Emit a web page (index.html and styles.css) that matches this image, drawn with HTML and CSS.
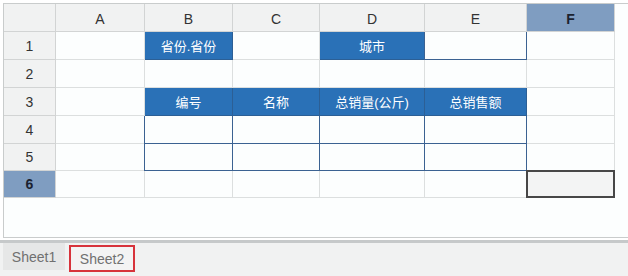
FILE: index.html
```html
<!DOCTYPE html>
<html lang="zh">
<head>
<meta charset="utf-8">
<link rel="stylesheet" href="styles.css">
</head>
<body>
<div class="app">
  <div class="sheet">
    <div class="grid">
      <div class="hd corner"></div>
      <div class="hd">A</div>
      <div class="hd">B</div>
      <div class="hd">C</div>
      <div class="hd">D</div>
      <div class="hd">E</div>
      <div class="hd sel">F</div>

      <div class="rh">1</div>
      <div class="c"></div>
      <div class="c blue">省份.省份</div>
      <div class="c"></div>
      <div class="c blue">城市</div>
      <div class="c boxed"></div>
      <div class="c"></div>

      <div class="rh">2</div>
      <div class="c"></div>
      <div class="c"></div>
      <div class="c"></div>
      <div class="c"></div>
      <div class="c"></div>
      <div class="c"></div>

      <div class="rh">3</div>
      <div class="c"></div>
      <div class="c blue">编号</div>
      <div class="c blue">名称</div>
      <div class="c blue">总销量(公斤)</div>
      <div class="c blue">总销售额</div>
      <div class="c"></div>

      <div class="rh">4</div>
      <div class="c"></div>
      <div class="c boxed"></div>
      <div class="c boxed"></div>
      <div class="c boxed"></div>
      <div class="c boxed"></div>
      <div class="c"></div>

      <div class="rh">5</div>
      <div class="c"></div>
      <div class="c boxed"></div>
      <div class="c boxed"></div>
      <div class="c boxed"></div>
      <div class="c boxed"></div>
      <div class="c"></div>

      <div class="rh sel">6</div>
      <div class="c"></div>
      <div class="c"></div>
      <div class="c"></div>
      <div class="c"></div>
      <div class="c"></div>
      <div class="c active"></div>
    </div>
  </div>
  <div class="tabbar">
    <div class="tab">Sheet1</div>
    <div class="tab current">Sheet2</div>
  </div>
</div>
</body>
</html>
```

FILE: styles.css
```css
* { box-sizing: border-box; }
html, body {
  margin: 0;
  padding: 0;
  background: #ffffff;
  font-family: "Liberation Sans", "Noto Sans CJK SC", Arial, sans-serif;
}
.app {
  width: 628px;
  height: 276px;
  display: flex;
  flex-direction: column;
  padding-top: 3px;
  overflow: hidden;
}
.sheet {
  margin-left: 3px;
  height: 235px;
  border: 1px solid #c9cccc;
  border-right: none;
  background: #fcfefe;
}
.grid {
  display: grid;
  grid-template-columns: 52px 89px 88px 87px 105px 102px 88px;
  grid-template-rows: 28px 28px 28px 28px 28px 27px 27px;
}
.hd, .rh {
  background: #f1f2f2;
  border-right: 1px solid #d2d4d4;
  border-bottom: 1px solid #d2d4d4;
  color: #333;
  font-size: 14px;
  display: flex;
  align-items: center;
  justify-content: center;
}
.hd { padding-top: 2px; }
.hd.sel, .rh.sel {
  background: #7f9dc1;
  color: #1b2230;
  font-weight: bold;
}
.c {
  border-right: 1px solid #dcdfdf;
  border-bottom: 1px solid #dcdfdf;
  background: #fcfefe;
  display: flex;
  align-items: center;
  justify-content: center;
  font-size: 13px;
}
.c.blue {
  background: #2a71b7;
  color: #ffffff;
  border-right-color: #2c5f95;
  border-bottom-color: #2c5f95;
}
.c.boxed {
  border-right: 1px solid #3b6292;
  border-bottom: 1px solid #3b6292;
  box-shadow: -1px 0 0 #3b6292;
}
.c.active {
  border: 2px solid #474747;
  background: #f3f4f4;
  margin: -1px 0 0 -1px;
}
.tabbar {
  margin-top: 2px;
  flex: 1;
  background: #f1f2f2;
  border-top: 3px solid #c6c9ca;
  display: flex;
  align-items: flex-start;
  gap: 4px;
  padding-left: 3px;
}
.tab {
  height: 27px;
  width: 62px;
  display: flex;
  align-items: center;
  justify-content: center;
  font-size: 14px;
  color: #707070;
  background: #e6e7e7;
}
.tab.current {
  margin-top: 2px;
  background: #f3f3f3;
  border: 2px solid #d7333b;
  width: 66px;
}
```
